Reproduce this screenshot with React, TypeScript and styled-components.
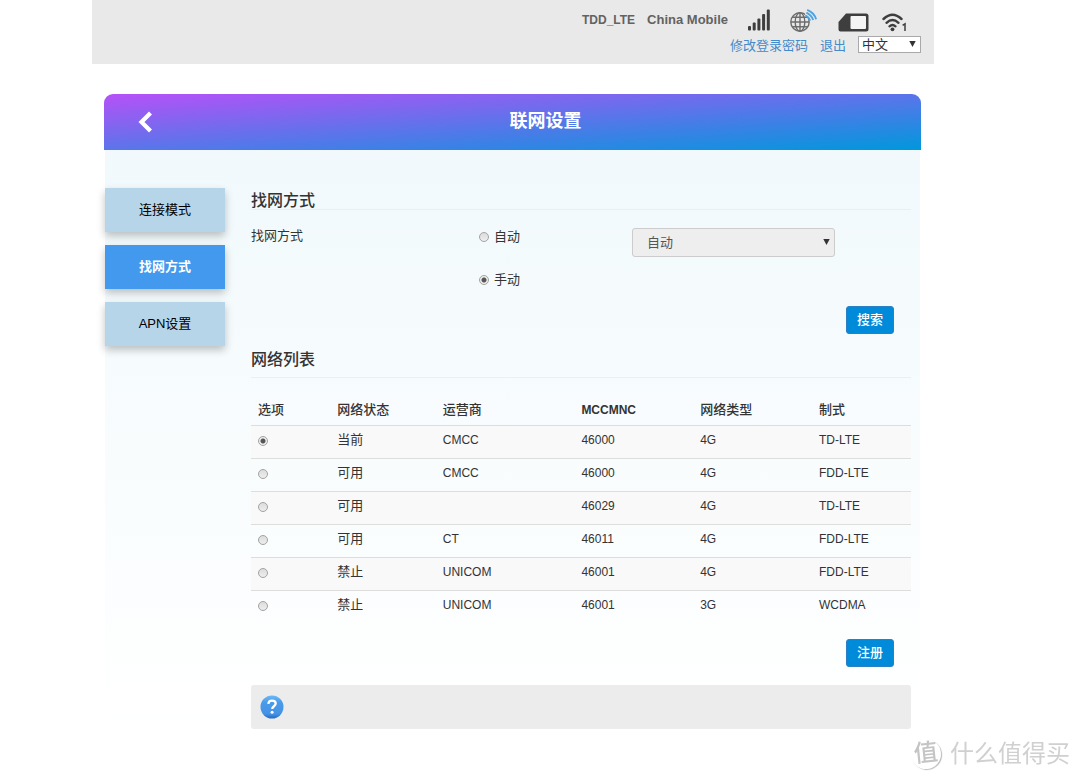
import React, { useState } from "react";
import styled, { createGlobalStyle, css } from "styled-components";

const GlobalStyle = createGlobalStyle`
  *, *::before, *::after { box-sizing: border-box; }
  body {
    margin: 0;
    background: #fff;
    color: #333;
    font-family: "Liberation Sans", "Noto Sans CJK SC", sans-serif;
    font-size: 13px;
    line-height: 18px;
  }
`;

const Page = styled.div`
  min-height: 100vh;
  padding: 0 146px 48px 92px;
`;

const TopBar = styled.header`
  display: flex;
  flex-direction: column;
  align-items: flex-end;
  gap: 4px;
  height: 64px;
  padding: 8px 13px 0;
  background: #e9e9e9;
`;

const StatusRow = styled.div`
  display: flex;
  align-items: center;
  height: 24px;
  padding-right: 14px;
  color: #626262;
  font-weight: bold;
`;

const NetworkType = styled.span`
  margin-right: 12px;
  font-size: 12px;
`;

const Operator = styled.span`
  margin-right: 20px;
`;

const StatusIcon = styled.svg<{ $gap?: number }>`
  display: block;
  flex: none;
  align-self: flex-end;
  margin-right: ${({ $gap = 0 }) => $gap}px;
`;

const AccountRow = styled.nav`
  display: flex;
  align-items: flex-start;
  gap: 12px;
`;

const AccountLink = styled.a`
  color: #428bca;
  line-height: 20px;
  text-decoration: none;
`;

const SelectBox = styled.div<{ $large?: boolean }>`
  position: relative;
  width: ${({ $large }) => ($large ? "100%" : "63px")};
  height: ${({ $large }) => ($large ? 29 : 17)}px;

  svg {
    position: absolute;
    top: ${({ $large }) => ($large ? 11 : 5)}px;
    right: 5px;
    pointer-events: none;
  }
`;

const Select = styled.select<{ $large?: boolean }>`
  display: block;
  width: 100%;
  height: 100%;
  margin: 0;
  appearance: none;
  font: inherit;
  ${({ $large }) =>
    $large
      ? css`
          padding: 0 14px;
          border: 1px solid #ccc;
          border-radius: 3px;
          background: #eee;
          color: #555;
          opacity: 1;
        `
      : css`
          padding: 0 3px;
          border: 1px solid #a9a9a9;
          border-radius: 0;
          background: #fff;
          color: #333;
          line-height: 15px;
        `}
`;

const Panel = styled.main`
  margin: 30px 13px 0 12px;
`;

const PanelHeader = styled.div`
  display: grid;
  grid-template-columns: 66px 1fr;
  align-items: center;
  height: 56px;
  border-radius: 9px 9px 0 0;
  background: linear-gradient(to bottom right, #b651f8, #0098dc);
`;

const BackButton = styled.button`
  justify-self: end;
  display: block;
  width: 32px;
  height: 32px;
  margin-right: 9px;
  padding: 0;
  border: 0;
  background: none;
  cursor: pointer;
`;

const PanelTitle = styled.h1`
  margin: 0 0 2px;
  color: #fff;
  font-size: 18px;
  line-height: 26px;
  text-align: center;
`;

const PanelBody = styled.div`
  display: flex;
  gap: 26px;
  margin: 0 1px;
  padding: 38px 9px 0 0;
  background: linear-gradient(#f1f9fc, #fff);
`;

const SideMenu = styled.nav`
  display: flex;
  flex: none;
  flex-direction: column;
  gap: 13px;
  width: 120px;
`;

const SideLink = styled.a<{ $active?: boolean }>`
  display: block;
  height: 44px;
  background: ${({ $active }) => ($active ? "#4399ee" : "#b7d5e8")};
  box-shadow: 0 4px 8px rgba(0, 0, 0, 0.24);
  color: ${({ $active }) => ($active ? "#fff" : "#000")};
  font-weight: ${({ $active }) => ($active ? "bold" : "normal")};
  line-height: 43px;
  text-align: center;
  text-decoration: none;
`;

const Content = styled.div`
  flex: 1;
  min-width: 0;
`;

const SectionTitle = styled.h2<{ $spaced?: boolean }>`
  margin: ${({ $spaced }) => ($spaced ? "18px 0 15px" : "5px 0 18px")};
  padding-bottom: ${({ $spaced }) => ($spaced ? 9 : 0)}px;
  border-bottom: 1px solid #eee;
  color: #333;
  font-size: 16px;
  font-weight: 500;
  line-height: 16px;
`;

const SearchForm = styled.div`
  display: grid;
  grid-template-columns: 228fr 153fr 203fr 76fr;
  align-items: start;
  padding-bottom: 1px;
`;

const FieldLabel = styled.span`
  line-height: 16px;
`;

const RadioGroup = styled.div`
  display: flex;
  flex-direction: column;
  gap: 25px;
`;

const RadioLabel = styled.label`
  display: flex;
  align-items: center;
  gap: 5px;
`;

const Radio = styled.input.attrs({ type: "radio" })`
  flex: none;
  display: block;
  width: 10px;
  height: 10px;
  margin: 0;
  appearance: none;
  border: 1px solid #a3a3a3;
  border-radius: 50%;
  background: linear-gradient(#dcdcdc, #eee);

  &:checked {
    background: radial-gradient(circle, #555 0 2px, #eee 3px);
  }
`;

const Actions = styled.div`
  display: flex;
  justify-content: flex-end;
  margin-top: 16px;
  padding-right: 17px;
`;

const ActionButton = styled.button`
  width: 48px;
  height: 28px;
  padding: 0;
  border: 1px solid #2b80c4;
  border-radius: 3px;
  background: #008ada;
  color: #fff;
  font: inherit;
  font-weight: 500;
  cursor: pointer;
`;

const NetworkTable = styled.table`
  width: 100%;
  border-collapse: collapse;
  table-layout: fixed;

  tbody tr:nth-child(odd) {
    background: #f9f9f9;
  }
`;

const HeadCell = styled.th<{ $width: number }>`
  width: ${({ $width }) => $width}%;
  height: 32px;
  padding: 2px 7px 0;
  font-weight: 500;
  text-align: left;
`;

const Cell = styled.td`
  height: 33px;
  padding: 0 7px 4px;
  border-top: 1px solid #ddd;

  &:first-child {
    padding-bottom: 2px;
  }
`;

const Code = styled.span<{ $strong?: boolean }>`
  font-size: 12px;
  font-weight: ${({ $strong }) => ($strong ? "bold" : "normal")};
`;

const HelpBar = styled.div`
  display: flex;
  align-items: center;
  height: 44px;
  margin-top: 18px;
  padding: 0 9px;
  border-radius: 3px;
  background: #ececec;
`;

const HelpButton = styled.button`
  display: block;
  width: 24px;
  height: 24px;
  padding: 0;
  border: 0;
  background: none;
  cursor: pointer;

  svg { display: block; }
`;

const Watermark = styled.div`
  position: fixed;
  right: 10px;
  bottom: 10px;
  display: flex;
  align-items: center;
  gap: 9px;
  color: #d0d0d0;
  font-size: 24px;
  line-height: 32px;
  text-shadow: -1px -1px 0 #fff;
`;

const WatermarkSeal = styled.span`
  width: 30px;
  height: 30px;
  border-radius: 50%;
  box-shadow: 1px 1px 1px #bbb;
  color: #c4c4c4;
  font-weight: 500;
  line-height: 28px;
  text-align: center;
  transform: rotate(-6deg);
`;

const Arrow = () => (
  <svg width="7" height="6" viewBox="0 0 7 6" aria-hidden="true">
    <path d="M0.3 0h6.4L3.5 6z" fill="#333" />
  </svg>
);

const SignalIcon = () => (
  <StatusIcon $gap={19} width="23" height="23" viewBox="0 0 23 23" fill="#3e3e3e">
    <rect x="0" y="17" width="3" height="4.5" rx="1" />
    <rect x="4.7" y="13.5" width="3" height="8" rx="1" />
    <rect x="9.4" y="9.5" width="3" height="12" rx="1" />
    <rect x="14.1" y="5" width="3" height="16.5" rx="1" />
    <rect x="18.8" y="0.5" width="3" height="21" rx="1" />
  </StatusIcon>
);

const GlobeIcon = () => (
  <StatusIcon $gap={20} width="28" height="24" viewBox="0 0 28 24" fill="none">
    <g stroke="#6c6c6c" strokeWidth="1.4">
      <circle cx="10" cy="14" r="9.2" />
      <ellipse cx="10" cy="14" rx="4.8" ry="9.2" />
      <path d="M10 5v18M1 14h18M2.4 9.2h15.2M2.4 18.8h15.2" />
    </g>
    <path d="M15 6.5L16.5 0H28v13h-6.5z" fill="#e9e9e9" />
    <g stroke="#4aa3e2" strokeWidth="1.9">
      <path d="M15.8 7.6q3.2 1.6 4.4 5" />
      <path d="M16.4 4.6q5 2.2 6.8 7.4" />
      <path d="M17.2 1.9q6.8 2.6 8.9 9.3" />
    </g>
  </StatusIcon>
);

const SimIcon = () => (
  <StatusIcon $gap={13} width="31" height="19" viewBox="0 0 31 19">
    <path
      d="M8 .5h20a2.5 2.5 0 0 1 2.5 2.5v13a2.5 2.5 0 0 1-2.5 2.5H2.5a2 2 0 0 1-2-2V9z"
      fill="#3e3e3e"
    />
    <rect x="12.5" y="3" width="15.5" height="13" rx="1" fill="#f4f4f4" />
  </StatusIcon>
);

const WifiIcon = () => (
  <StatusIcon width="25" height="20" viewBox="0 0 25 20" fill="none">
    <g stroke="#3e3e3e" strokeWidth="2.4" strokeLinecap="round">
      <path d="M1.5 7q9-8.4 18 0" />
      <path d="M4.5 10.8q6-5.4 12 0" />
      <path d="M7.5 14.3q3-2.6 6 0" />
    </g>
    <circle cx="10.5" cy="17.3" r="1.9" fill="#3e3e3e" />
    <path d="M20.6 13.4l2.4-1.6v7.2" stroke="#3e3e3e" strokeWidth="1.5" />
  </StatusIcon>
);

const columns = [
  { label: "选项", width: 12 },
  { label: "网络状态", width: 16 },
  { label: "运营商", width: 21 },
  { label: "MCCMNC", width: 18 },
  { label: "网络类型", width: 18 },
  { label: "制式", width: 15 },
];

const networks = [
  ["当前", "CMCC", "46000", "4G", "TD-LTE"],
  ["可用", "CMCC", "46000", "4G", "FDD-LTE"],
  ["可用", "", "46029", "4G", "TD-LTE"],
  ["可用", "CT", "46011", "4G", "FDD-LTE"],
  ["禁止", "UNICOM", "46001", "4G", "FDD-LTE"],
  ["禁止", "UNICOM", "46001", "3G", "WCDMA"],
];

export default function App() {
  const [mode, setMode] = useState("manual");
  const [selected, setSelected] = useState(0);

  return (
    <>
      <GlobalStyle />
      <Page lang="zh-CN">
        <TopBar>
          <StatusRow>
            <NetworkType>TDD_LTE</NetworkType>
            <Operator>China Mobile</Operator>
            <SignalIcon />
            <GlobeIcon />
            <SimIcon />
            <WifiIcon />
          </StatusRow>
          <AccountRow>
            <AccountLink href="#password">修改登录密码</AccountLink>
            <AccountLink href="#logout">退出</AccountLink>
            <SelectBox>
              <Select aria-label="语言" defaultValue="zh">
                <option value="zh">中文</option>
              </Select>
              <Arrow />
            </SelectBox>
          </AccountRow>
        </TopBar>

        <Panel>
          <PanelHeader>
            <BackButton type="button" aria-label="返回">
              <svg width="32" height="32" viewBox="0 0 32 32" fill="none">
                <path d="M21.5 7l-9 9 9 9" stroke="#fff" strokeWidth="4.2" />
              </svg>
            </BackButton>
            <PanelTitle>联网设置</PanelTitle>
          </PanelHeader>

          <PanelBody>
            <SideMenu>
              <SideLink href="#mode">连接模式</SideLink>
              <SideLink href="#search" $active aria-current="page">找网方式</SideLink>
              <SideLink href="#apn">APN设置</SideLink>
            </SideMenu>

            <Content>
              <SectionTitle>找网方式</SectionTitle>
              <SearchForm>
                <FieldLabel id="search-mode">找网方式</FieldLabel>
                <RadioGroup role="radiogroup" aria-labelledby="search-mode">
                  <RadioLabel>
                    <Radio name="mode" checked={mode === "auto"} onChange={() => setMode("auto")} />
                    自动
                  </RadioLabel>
                  <RadioLabel>
                    <Radio name="mode" checked={mode === "manual"} onChange={() => setMode("manual")} />
                    手动
                  </RadioLabel>
                </RadioGroup>
                <SelectBox $large>
                  <Select $large disabled aria-labelledby="search-mode" defaultValue="auto">
                    <option value="auto">自动</option>
                  </Select>
                  <Arrow />
                </SelectBox>
              </SearchForm>
              <Actions>
                <ActionButton type="button">搜索</ActionButton>
              </Actions>

              <SectionTitle $spaced>网络列表</SectionTitle>
              <NetworkTable>
                <thead>
                  <tr>
                    {columns.map(({ label, width }) => (
                      <HeadCell key={label} $width={width} scope="col">
                        {label === "MCCMNC" ? <Code $strong>{label}</Code> : label}
                      </HeadCell>
                    ))}
                  </tr>
                </thead>
                <tbody>
                  {networks.map(([status, ...codes], row) => (
                    <tr key={row}>
                      <Cell>
                        <Radio
                          name="network"
                          aria-label={`${status} ${codes.join(" ")}`}
                          checked={selected === row}
                          onChange={() => setSelected(row)}
                        />
                      </Cell>
                      <Cell>{status}</Cell>
                      {codes.map((code, i) => (
                        <Cell key={i}>
                          <Code>{code}</Code>
                        </Cell>
                      ))}
                    </tr>
                  ))}
                </tbody>
              </NetworkTable>
              <Actions>
                <ActionButton type="button">注册</ActionButton>
              </Actions>

              <HelpBar>
                <HelpButton type="button" aria-label="帮助">
                  <svg width="24" height="24" viewBox="0 0 24 24" fill="none">
                    <defs>
                      <linearGradient id="help-fill" x1="0" y1="0" x2="0" y2="1">
                        <stop offset="0" stopColor="#6cb8f5" />
                        <stop offset="0.3" stopColor="#4a9bea" />
                        <stop offset="0.8" stopColor="#4592e4" />
                        <stop offset="1" stopColor="#2468c4" />
                      </linearGradient>
                    </defs>
                    <circle cx="12" cy="12" r="11.5" fill="url(#help-fill)" />
                    <path
                      d="M8.3 8.8c.2-2.2 1.7-3.2 3.7-3.2 2.2 0 3.7 1.2 3.7 3 0 2.6-3.5 2.7-3.5 5.4"
                      stroke="#fff"
                      strokeWidth="2.3"
                    />
                    <circle cx="12.1" cy="17.2" r="1.5" fill="#fff" />
                  </svg>
                </HelpButton>
              </HelpBar>
            </Content>
          </PanelBody>
        </Panel>
      </Page>
      <Watermark>
        <WatermarkSeal>值</WatermarkSeal>
        什么值得买
      </Watermark>
    </>
  );
}
